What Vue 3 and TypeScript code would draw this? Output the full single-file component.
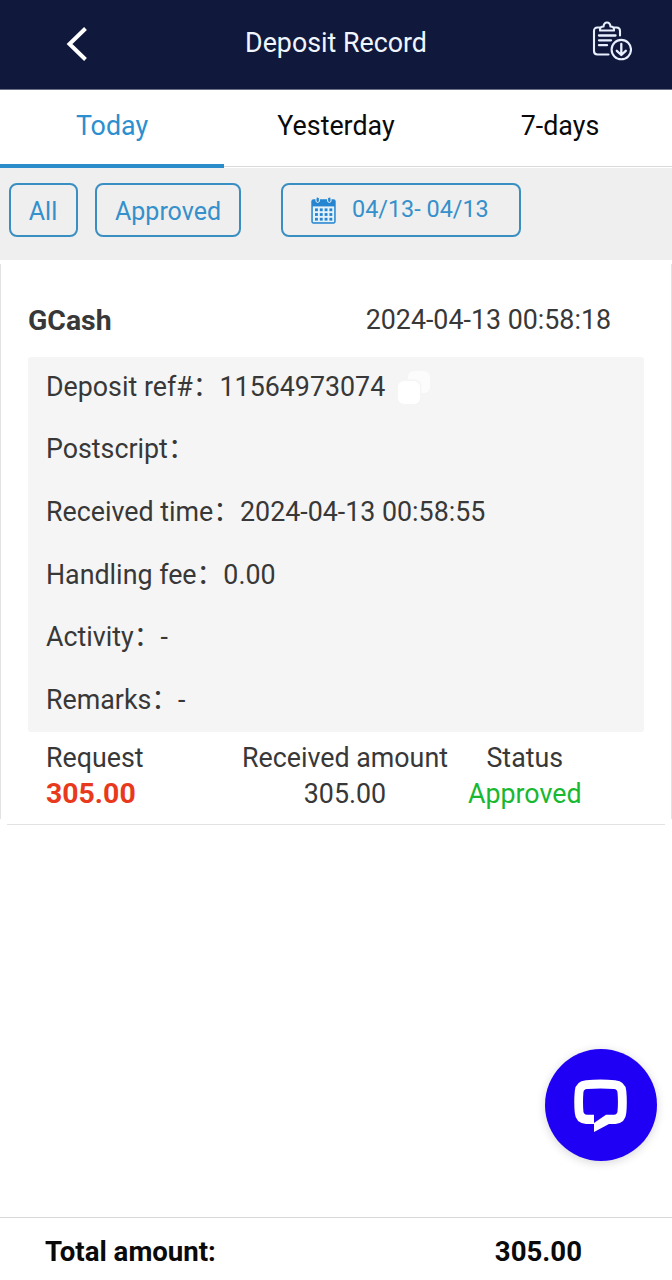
<script setup lang="ts">
import { ref } from 'vue'

interface Detail {
  label: string
  value: string
  copyable?: boolean
}

const tabs: string[] = ['Today', 'Yesterday', '7-days']
const activeTab = ref('Today')

const details: Detail[] = [
  { label: 'Deposit ref#', value: '11564973074', copyable: true },
  { label: 'Postscript', value: '' },
  { label: 'Received time', value: '2024-04-13 00:58:55' },
  { label: 'Handling fee', value: '0.00' },
  { label: 'Activity', value: '-' },
  { label: 'Remarks', value: '-' },
]

const dotRows = [11.4, 16.1, 20.8]
const dotCols = [4, 8.8, 13.6, 18.4]
</script>

<template>
  <div class="screen">
    <header class="topbar">
      <button class="icon-btn back" aria-label="Back">
        <svg width="22" height="36" viewBox="0 0 22 36" fill="none" stroke="#fff" stroke-width="4">
          <path d="M19.5 2.5 L3.5 18 L19.5 33.5" />
        </svg>
      </button>
      <h1 class="title">Deposit Record</h1>
      <button class="icon-btn export" aria-label="Export">
        <svg width="40" height="40" viewBox="0 0 40 40" fill="none" stroke="#e8f0ff" stroke-width="2.1" stroke-linecap="round" stroke-linejoin="round">
          <path d="M7.5 6.5H5.5Q2 6.5 2 10V30Q2 33.5 5.500 33.500H16.500" />
          <path d="M22.500 6.500H24.500Q28 6.500 28 10V14.500" />
          <path d="M8 9.500Q7.500 5.500 11.500 5.500Q12 1.500 15 1.500Q18 1.500 18.500 5.500Q22.500 5.500 22 9.500Z" />
          <path d="M7 14.500H23.500M7 19.300H19M7 24.200H15" stroke-width="2.300" />
          <circle cx="29.300" cy="28.600" r="9.700" />
          <path d="M29.300 23V34M24.800 29.800L29.300 34L33.800 29.800" stroke-width="2.300" />
        </svg>
      </button>
    </header>

    <nav class="tabs">
      <button
        v-for="tab in tabs"
        :key="tab"
        class="tab"
        :class="{ active: tab === activeTab }"
        @click="activeTab = tab"
      >{{ tab }}</button>
    </nav>

    <section class="filters">
      <button class="chip all">All</button>
      <button class="chip approved">Approved</button>
      <button class="chip range">
        <svg width="25" height="27" viewBox="0 0 25 27">
          <path fill="#2585d0" d="M2.5 2.2H22.5Q24.7 2.2 24.7 4.500V24Q24.7 26.7 22.5 26.7H2.5Q.3 26.7 .3 24V4.500Q.3 2.2 2.5 2.2Z" />
          <path fill="#e6f2fa" d="M1.800 9.400H23.200V25.200H1.800Z" />
          <path fill="#2585d0" stroke="#efefef" stroke-width="1" d="M5 1Q6.700-.8 8.400 1V4.500Q6.700 6.500 5 4.500ZM16.600 1Q18.300-.8 20 1V4.500Q18.300 6.500 16.600 4.500Z" />
          <g fill="#2585d0">
            <template v-for="y in dotRows" :key="y">
              <rect v-for="x in dotCols" :key="x" :x="x" :y="y" width="2.900" height="2.800" />
            </template>
          </g>
        </svg>
        <span class="range-text">04/13- 04/13</span>
      </button>
    </section>

    <main class="content">
      <article class="card">
        <div class="card-head">
          <strong class="method">GCash</strong>
          <time class="stamp">2024-04-13 00:58:18</time>
        </div>
        <ul class="details">
          <li v-for="d in details" :key="d.label" class="detail">
            <span>{{ d.label }}：</span>
            <span>{{ d.value }}</span>
            <svg v-if="d.copyable" class="copy" width="34" height="34" viewBox="0 0 34 34">
              <rect x="11" y="0" width="22" height="22" rx="6" fill="#fcfcfc" />
              <rect x="0.5" y="8.5" width="24" height="25" rx="7" fill="#f5f5f5" />
              <rect x="1" y="10" width="22" height="23" rx="6" fill="#fff" />
            </svg>
          </li>
        </ul>
        <div class="summary">
          <div class="cell request"><span>Request</span><b class="red">305.00</b></div>
          <div class="cell received"><span>Received amount</span><span>305.00</span></div>
          <div class="cell status"><span>Status</span><span class="green">Approved</span></div>
        </div>
      </article>
      <hr class="divider" />
    </main>

    <button class="chat" aria-label="Chat">
      <svg width="54" height="54" viewBox="0 0 54 54">
        <path fill="#fff" fill-rule="evenodd" d="M12 1.300Q26.500 -.3 41 1.300Q51.500 2.300 52.300 12Q53.300 23 52.300 34Q51.500 44 41.500 45H35L20 53V45H12Q1.500 44 .8 34Q-.3 23 .8 12Q1.500 2.300 12 1.300ZM13 10Q9.700 10.300 9.400 13.500Q8.600 23 9.400 32.500Q9.700 35.500 13 35.800H20V44L32 35.800H40Q43.200 35.500 43.500 32.500Q44.400 23 43.500 13.500Q43.200 10.300 40 10Q26.500 8.800 13 10Z" />
      </svg>
    </button>

    <footer class="total">
      <span>Total amount:</span>
      <span class="sum">305.00</span>
    </footer>
  </div>
</template>

<style>
body { margin: 0; background: #fff; }
</style>

<style scoped>
.screen {
  position: relative;
  display: flex;
  flex-direction: column;
  width: 672px;
  height: 1280px;
  overflow: hidden;
  background: #fff;
  color: #383838;
  font-family: Roboto, "Noto Sans CJK SC", sans-serif;
  font-size: 26.8px;
}
button {
  margin: 0;
  padding: 0;
  border: 0;
  background: none;
  font: inherit;
  color: inherit;
  box-sizing: border-box;
}
svg { display: block; flex: none; }
.topbar {
  display: grid;
  grid-template-columns: 1fr auto 1fr;
  height: 90px;
  box-sizing: border-box;
  padding-bottom: 3px;
  align-items: center;
  background: #10183c;
  border-bottom: 1px solid #6b7088;
  flex: none;
}
.back { justify-self: start; margin: 1px 0 0 66px; }
.export { justify-self: end; margin: -4px 40px 0 0; }
.title {
  margin: 0;
  font-size: 26.8px;
  font-weight: 400;
  color: #f0f6ff;
}
.tabs {
  display: grid;
  grid-template-columns: repeat(3, 1fr);
  height: 78px;
  flex: none;
}
.tab {
  height: 77px;
  padding-bottom: 4px;
  border-bottom: 1px solid #d8dadc;
  color: #0a0a0a;
}
.tab.active {
  height: 78px;
  padding-bottom: 2px;
  color: #2b8fd0;
  border-bottom: 4px solid #2b8cca;
}
.filters {
  display: flex;
  align-items: flex-start;
  height: 92px;
  box-sizing: border-box;
  padding: 15px 9px;
  background: #efefef;
  flex: none;
}
.chip {
  height: 54px;
  border: 2px solid #3a8fc2;
  border-radius: 8px;
  color: #3590cb;
  font-size: 25px;
}
.all, .approved { padding-top: 2px; }
.all { width: 69px; padding-right: 1px; }
.approved { width: 146px; margin-left: 17px; }
.range {
  display: flex;
  align-items: center;
  width: 240px;
  margin-left: 40px;
  padding-left: 28px;
}
.range-text { margin: -2px 0 0 16px; font-size: 23.4px; }
.content { flex: 1; padding-top: 4px; }
.card {
  height: 555px;
  box-sizing: border-box;
  padding: 26px 27px 0;
  border: solid #e2e2e2;
  border-width: 0 1px;
}
.card-head {
  display: flex;
  justify-content: space-between;
  align-items: center;
  height: 60px;
  padding-right: 33px;
}
.method { font-size: 28.4px; font-weight: 700; }
.details {
  margin: 7px 0 0;
  padding: 0;
  height: 375px;
  list-style: none;
  background: #f5f5f5;
  border-radius: 3px;
}
.detail {
  display: flex;
  align-items: center;
  height: 62.6px;
  line-height: 60px;
  padding: 0 0 3px 18px;
  box-sizing: border-box;
}
.copy { margin: 2px 0 0 12px; }
.summary { display: flex; padding: 8px 0 0 18px; }
.cell { display: flex; flex-direction: column; line-height: 36px; align-items: center; }
.request { width: 196px; align-items: flex-start; }
.status { margin-left: 20px; }
.red { color: #e8391c; font-size: 28.4px; }
.green { color: #18b830; }
.divider { margin: 5px 7px 0; border: 0; height: 1px; background: #e2e2e2; }
.chat {
  position: absolute;
  left: 545px;
  top: 1048.5px;
  display: grid;
  place-items: center;
  width: 112px;
  height: 112px;
  padding-top: 2px;
  border-radius: 50%;
  background: #2000f5;
  box-shadow: 0 2px 10px rgba(0, 0, 0, 0.16);
}
.total {
  display: flex;
  justify-content: space-between;
  align-items: center;
  height: 63px;
  box-sizing: border-box;
  padding: 4px 90px 0 45px;
  border-top: 1px solid #d8d8d8;
  color: #0a0a0a;
  font-size: 27.6px;
  font-weight: 700;
  flex: none;
}
</style>
